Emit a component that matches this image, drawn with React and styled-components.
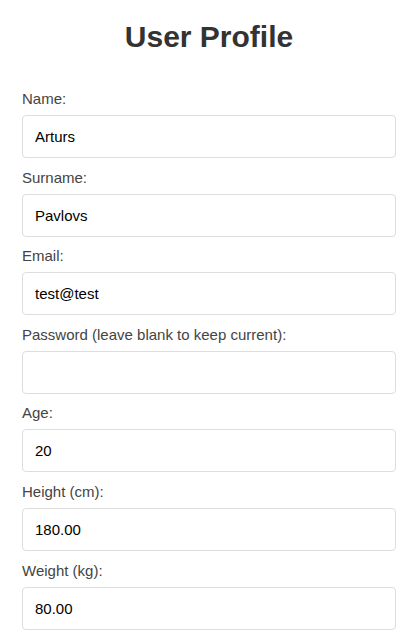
import React from 'react';
import styled, { createGlobalStyle } from 'styled-components';

const GlobalStyle = createGlobalStyle`
  body {
    margin: 0;
    background: #fff;
    font-family: "Liberation Sans", Arial, sans-serif;
  }
`;

const fields = [
  { id: 'name', label: 'Name:', value: 'Arturs', type: 'text' },
  { id: 'surname', label: 'Surname:', value: 'Pavlovs', type: 'text' },
  { id: 'email', label: 'Email:', value: 'test@test', type: 'email' },
  { id: 'password', label: 'Password (leave blank to keep current):', value: '', type: 'password' },
  { id: 'age', label: 'Age:', value: '20', type: 'number' },
  { id: 'height', label: 'Height (cm):', value: '180.00', type: 'text' },
  { id: 'weight', label: 'Weight (kg):', value: '80.00', type: 'text' },
];

const App = () => {
  return (
    <>
      <GlobalStyle />
      <Container>
        <Title>User Profile</Title>
        <Form onSubmit={e => e.preventDefault()}>
          {fields.map(field => (
            <Group key={field.id}>
              <Label htmlFor={field.id}>{field.label}</Label>
              <Input id={field.id} type={field.type} defaultValue={field.value} />
            </Group>
          ))}
        </Form>
      </Container>
    </>
  );
};

const Container = styled.div`
  padding: 20px 12px 0 22px;
`;

const Title = styled.h1`
  margin: 0 0 36px;
  font-size: 30px;
  font-weight: bold;
  color: #333;
  text-align: center;
`;

const Form = styled.form`
  display: flex;
  flex-direction: column;
`;

const Group = styled.div`
  display: flex;
  flex-direction: column;
  margin-bottom: 10.6px;
`;

const Label = styled.label`
  font-size: 15px;
  color: #444;
  margin-bottom: 8px;
`;

const Input = styled.input`
  box-sizing: border-box;
  width: 100%;
  padding: 12px;
  font-family: "Liberation Sans", Arial, sans-serif;
  font-size: 15px;
  color: #000;
  border: 1px solid #ddd;
  border-radius: 4px;
  outline: none;
  background: #fff;
  -moz-appearance: textfield;

  &::-webkit-outer-spin-button,
  &::-webkit-inner-spin-button {
    -webkit-appearance: none;
    margin: 0;
  }
`;

export default App;
